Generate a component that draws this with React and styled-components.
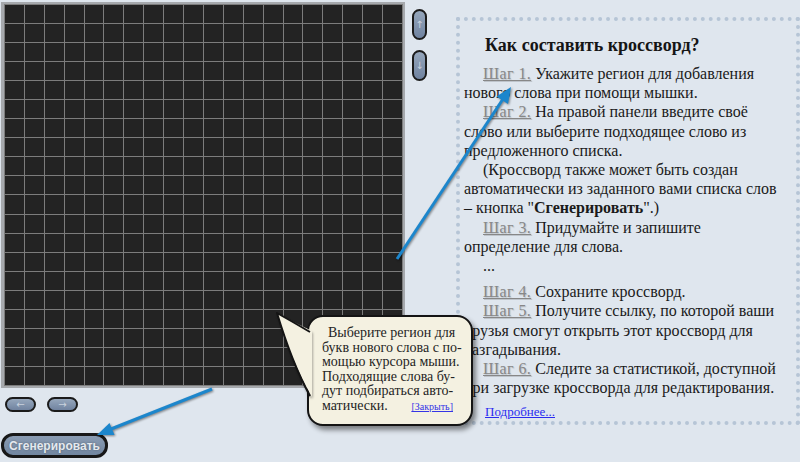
import React from 'react';
import styled, { createGlobalStyle } from 'styled-components';

const GlobalStyle = createGlobalStyle`
  html, body { margin: 0; padding: 0; background: #dfe6ee; }
  body { font-family: "Liberation Serif", "DejaVu Serif", serif; }
  * { box-sizing: border-box; }
`;

const Page = styled.div`
  position: relative;
  width: 800px;
  height: 462px;
  display: flex;
  align-items: flex-start;
  overflow: hidden;
`;

const LeftColumn = styled.div`
  display: flex;
  flex-direction: column;
  padding: 2px 0 0 1px;
`;

const TopRow = styled.div`
  display: flex;
  align-items: flex-start;
  gap: 7px;
`;

const Board = styled.div`
  width: 404px;
  height: 386px;
  border: 2px solid #a6a9ad;
  border-left-width: 3px;
  padding: 1px;
  background: #7c7c7c;
  display: grid;
  grid-template-columns: repeat(20, 1fr);
  grid-template-rows: repeat(20, 1fr);
  gap: 1px;
`;

const Cell = styled.div`
  background: #232323;
`;

const SideButtons = styled.div`
  display: flex;
  flex-direction: column;
  gap: 10px;
  padding-top: 7px;
`;

const RoundButton = styled.button`
  display: flex;
  align-items: center;
  justify-content: center;
  padding: 0;
  width: ${p => p.$w}px;
  height: ${p => p.$h}px;
  border: 2px solid #1b1b1b;
  border-radius: 8px;
  background: linear-gradient(#96a7bc, #7083a0);
  color: #c9d2dd;
  font-family: "DejaVu Sans", sans-serif;
  font-size: 10px;
  line-height: 1;
  cursor: pointer;
`;

const NavRow = styled.div`
  display: flex;
  gap: 11px;
  margin-top: 9px;
  padding-left: 4px;
`;

const GenerateButton = styled.button`
  margin-top: 21px;
  width: 107px;
  height: 25px;
  padding: 0;
  border: 3px solid #181818;
  border-radius: 12px;
  background: linear-gradient(#8a9cb3, #7186a0);
  color: #e4e9ef;
  font-family: "Liberation Sans", Arial, sans-serif;
  font-weight: bold;
  font-size: 12px;
  text-shadow: 0 0 2px rgba(0, 0, 0, 0.35);
  cursor: pointer;
`;

const Panel = styled.div`
  margin: 17px 0 0 29px;
  width: 344px;
  height: 408px;
  border: 4px dotted #b6c5d6;
  padding: 13px 0 0 4px;
  color: #1a1a1a;
  font-size: 16px;
  line-height: 19.2px;
  white-space: nowrap;
`;

const Title = styled.h2`
  margin: 0 0 8px;
  font-size: 18px;
  line-height: 22px;
  font-weight: bold;
  text-indent: 21px;
  color: #151515;
`;

const Para = styled.p`
  margin: ${p => (p.$gap ? '7px' : '0')} 0 0;
  text-indent: 19px;
`;

const Step = styled.a`
  color: #878787;
  text-decoration: underline;
  letter-spacing: 0.4px;
  text-shadow: 1px 1px 1px rgba(0, 0, 0, 0.15);
`;

const More = styled.a`
  display: block;
  margin-top: 7px;
  padding-left: 21px;
  font-size: 13px;
  line-height: 16px;
  color: #2b2bf0;
  text-decoration: underline;
`;

const Bubble = styled.div`
  position: absolute;
  left: 307px;
  top: 315px;
  width: 166px;
  height: 111px;
  border: 2px solid #141414;
  border-radius: 16px;
  background: #f4f1e1;
  box-shadow: 3px 4px 5px rgba(0, 0, 0, 0.45);
  padding: 9px 10px 0 13px;
  font-size: 14px;
  line-height: 14.6px;
  color: #242424;
  white-space: nowrap;
  z-index: 5;
`;

const Tail = styled.svg`
  position: absolute;
  left: -36px;
  top: -6px;
  overflow: visible;
  filter: drop-shadow(1px 2px 1px rgba(0, 0, 0, 0.3));
`;

const BubbleText = styled.div`
  position: relative;
  text-indent: 6px;
`;

const LastLine = styled.div`
  display: flex;
  align-items: baseline;
  justify-content: space-between;
  padding-right: 8px;
`;

const CloseLink = styled.a`
  font-size: 10px;
  color: #3535e6;
  text-decoration: underline;
`;

const Overlay = styled.svg`
  position: absolute;
  left: 0;
  top: 0;
  pointer-events: none;
  z-index: 10;
  filter: drop-shadow(1px 1px 1px rgba(0, 0, 0, 0.45));
`;

const cells = Array.from({ length: 400 }, (_, i) => i);

export default function App() {
  return (
    <>
      <GlobalStyle />
      <Page>
        <LeftColumn>
          <TopRow>
            <Board>
              {cells.map(i => <Cell key={i} />)}
            </Board>
            <SideButtons>
              <RoundButton $w={15} $h={31}>↑</RoundButton>
              <RoundButton $w={15} $h={31}>↓</RoundButton>
            </SideButtons>
          </TopRow>
          <NavRow>
            <RoundButton $w={31} $h={15}>←</RoundButton>
            <RoundButton $w={31} $h={15}>→</RoundButton>
          </NavRow>
          <GenerateButton>Сгенерировать</GenerateButton>
        </LeftColumn>

        <Panel>
          <Title>Как составить кроссворд?</Title>
          <Para>
            <Step>Шаг 1.</Step> Укажите регион для добавления<br />
            нового слова при помощи мышки.
          </Para>
          <Para>
            <Step>Шаг 2.</Step> На правой панели введите своё<br />
            слово или выберите подходящее слово из<br />
            предложенного списка.
          </Para>
          <Para>
            (Кроссворд также может быть создан<br />
            автоматически из заданного вами списка слов<br />
            – кнопка "<b>Сгенерировать</b>".)
          </Para>
          <Para>
            <Step>Шаг 3.</Step> Придумайте и запишите<br />
            определение для слова.
          </Para>
          <Para>...</Para>
          <Para $gap>
            <Step>Шаг 4.</Step> Сохраните кроссворд.
          </Para>
          <Para>
            <Step>Шаг 5.</Step> Получите ссылку, по которой ваши<br />
            друзья смогут открыть этот кроссворд для<br />
            разгадывания.
          </Para>
          <Para>
            <Step>Шаг 6.</Step> Следите за статистикой, доступной<br />
            при загрузке кроссворда для редактирования.
          </Para>
          <More>Подробнее...</More>
        </Panel>

        <Bubble>
          <Tail width="40" height="90" viewBox="0 0 40 90">
            <path d="M4 2 Q20 11 39 20 L39 86 Q19 52 4 2 Z" fill="#f4f1e1" />
            <path d="M37 21 Q20 11 4 2 Q19 52 37 85" fill="none" stroke="#141414" strokeWidth="2" strokeLinejoin="round" />
          </Tail>
          <BubbleText>
            Выберите регион для<br />
            букв нового слова с по-<br />
            мощью курсора мыши.<br />
            Подходящие слова бу-<br />
            дут подбираться авто-
          </BubbleText>
          <LastLine>
            <span>матически.</span>
            <CloseLink>[Закрыть]</CloseLink>
          </LastLine>
        </Bubble>

        <Overlay width="800" height="462" viewBox="0 0 800 462">
          <line x1="397" y1="259" x2="503" y2="99" stroke="#1c86cc" strokeWidth="3" />
          <polygon points="511,87 508,104 496.5,96.5" fill="#1c86cc" />
          <line x1="212" y1="389" x2="111" y2="429" stroke="#1c86cc" strokeWidth="3" />
          <polygon points="97,435 114.5,435 109.5,423" fill="#1c86cc" />
        </Overlay>
      </Page>
    </>
  );
}
